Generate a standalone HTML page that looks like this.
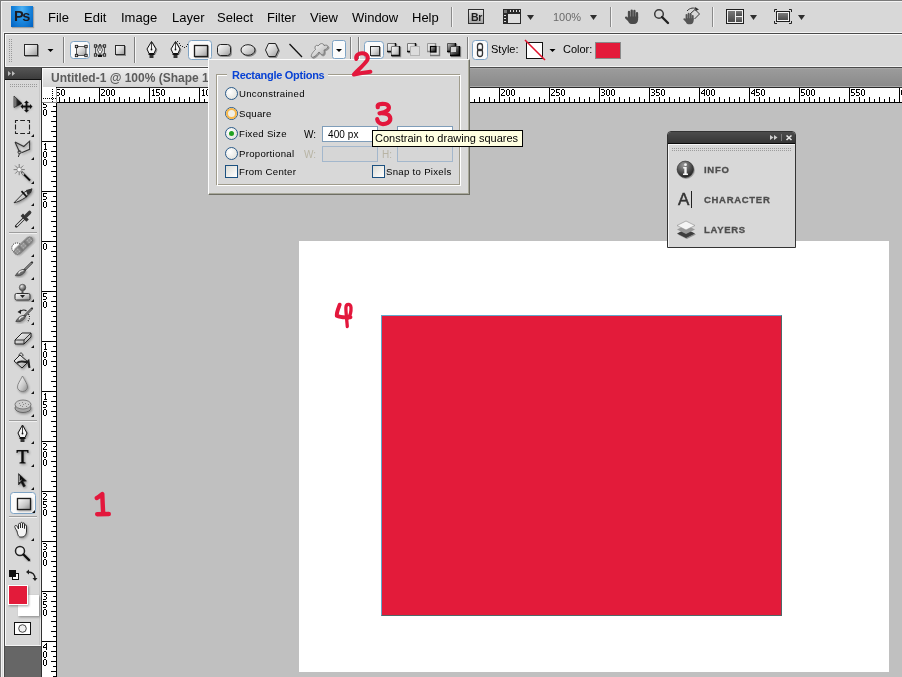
<!DOCTYPE html><html><head><meta charset="utf-8"><style>
*{margin:0;padding:0;box-sizing:border-box}
html,body{width:902px;height:677px;overflow:hidden;background:#c0c0c0;font-family:"Liberation Sans",sans-serif;position:relative}
.a{position:absolute}
.t{position:absolute;white-space:nowrap;line-height:1;will-change:transform}
svg{position:absolute;overflow:visible}
</style></head><body><div class="a" style="left:0px;top:0px;width:902px;height:677px;background:#c0c0c0"></div><div class="a" style="left:0px;top:0px;width:902px;height:33px;background:#d8d8d8"></div><div class="a" style="left:0px;top:0px;width:902px;height:1px;background:#7a7a7a"></div><div class="a" style="left:1px;top:1px;width:901px;height:1px;background:#f4f4f4"></div><div class="a" style="left:0px;top:0px;width:1px;height:677px;background:#7a7a7a"></div><div class="a" style="left:1px;top:1px;width:1px;height:676px;background:#f2f2f2"></div><div class="a" style="left:2px;top:33px;width:1px;height:644px;background:#d8d8d8"></div><div class="a" style="left:3px;top:32px;width:1px;height:645px;background:#f4f4f4"></div><div class="a" style="left:4px;top:33px;width:1px;height:644px;background:#4a4a4a"></div><div class="a" style="left:11px;top:6px;width:22px;height:21px;background:radial-gradient(ellipse at 50% 15%,#4fb3f5 0%,#1c8ae0 45%,#0060c0 100%);box-shadow:1px 1px 1px rgba(0,0,0,.25)"></div><div class="t" style="left:14px;top:9px;font-size:14.5px;font-weight:bold;color:#1c1c24;letter-spacing:-1.3px;line-height:15px">Ps</div><div class="t" style="left:48px;top:10px;font-size:13px;line-height:15px;color:#000">File</div><div class="t" style="left:84px;top:10px;font-size:13px;line-height:15px;color:#000">Edit</div><div class="t" style="left:121px;top:10px;font-size:13px;line-height:15px;color:#000">Image</div><div class="t" style="left:172px;top:10px;font-size:13px;line-height:15px;color:#000">Layer</div><div class="t" style="left:217px;top:10px;font-size:13px;line-height:15px;color:#000">Select</div><div class="t" style="left:267px;top:10px;font-size:13px;line-height:15px;color:#000">Filter</div><div class="t" style="left:310px;top:10px;font-size:13px;line-height:15px;color:#000">View</div><div class="t" style="left:352px;top:10px;font-size:13px;line-height:15px;color:#000">Window</div><div class="t" style="left:412px;top:10px;font-size:13px;line-height:15px;color:#000">Help</div><div class="a" style="left:451px;top:7px;width:1px;height:20px;background:#8a8a8a"></div><div class="a" style="left:452px;top:7px;width:1px;height:20px;background:#f2f2f2"></div><div class="a" style="left:610px;top:7px;width:1px;height:20px;background:#8a8a8a"></div><div class="a" style="left:611px;top:7px;width:1px;height:20px;background:#f2f2f2"></div><div class="a" style="left:712px;top:7px;width:1px;height:20px;background:#8a8a8a"></div><div class="a" style="left:713px;top:7px;width:1px;height:20px;background:#f2f2f2"></div><svg style="left:0px;top:0px" width="902" height="40" viewBox="0 0 902 40" ><defs><linearGradient id="brg" x1="0" y1="0" x2="0" y2="1"><stop offset="0" stop-color="#e6e6e6"/><stop offset="1" stop-color="#a4a4a4"/></linearGradient><linearGradient id="dg" x1="0" y1="0" x2="0" y2="1"><stop offset="0" stop-color="#7a7a7a"/><stop offset="1" stop-color="#4a4a4a"/></linearGradient></defs><rect x="468.5" y="9.5" width="15" height="14" fill="url(#brg)" stroke="#2e2e2e"/><rect x="503" y="9" width="18" height="15" fill="#2a2a2a"/><rect x="508" y="14" width="12" height="9" fill="#dedede"/><rect x="504" y="10" width="3" height="3" fill="#777"/><rect x="510" y="10" width="1" height="2" fill="#ddd"/><rect x="513" y="10" width="1" height="2" fill="#ddd"/><rect x="516" y="10" width="1" height="2" fill="#ddd"/><rect x="519" y="10" width="1" height="2" fill="#ddd"/><rect x="504" y="15" width="2" height="1" fill="#ddd"/><rect x="504" y="18" width="2" height="1" fill="#ddd"/><rect x="504" y="21" width="2" height="1" fill="#ddd"/><path d="M527 15h7l-3.5 5z" fill="#2e2e2e"/><path d="M590 15h7l-3.5 5z" fill="#2e2e2e"/><path d="M750 15h7l-3.5 5z" fill="#2e2e2e"/><path d="M798 15h7l-3.5 5z" fill="#2e2e2e"/><g transform="translate(624.5 9) scale(1.0)" fill="#4a4a4a" stroke="#4a4a4a"><path d="M4.5 8.5 V3 M7.2 8 V1.6 M9.9 8 V2 M12.5 9 V4.2 M4.2 11.2 L1.6 8.6" stroke-width="2.3" stroke-linecap="round" fill="none"/><path d="M3.4 7.5 H13.6 V10.5 C13.6 13 12 15 9.5 15 H7 C5 15 3.4 13 3.4 10.5Z" stroke="none"/></g><circle cx="659" cy="14" r="4.3" fill="none" stroke="#3a3a3a" stroke-width="1.5"/><path d="M662 17 L668 23" stroke="#222" stroke-width="2.4" stroke-linecap="round"/><path d="M690 14 L695 9.5 L699.5 14 L694.5 19" fill="none" stroke="#333" stroke-width="1"/><g transform="translate(683 12.5) scale(0.78)" fill="#555" stroke="#555"><path d="M4.5 8.5 V3 M7.2 8 V1.6 M9.9 8 V2 M12.5 9 V4.2 M4.2 11.2 L1.6 8.6" stroke-width="2.3" stroke-linecap="round" fill="none"/><path d="M3.4 7.5 H13.6 V10.5 C13.6 13 12 15 9.5 15 H7 C5 15 3.4 13 3.4 10.5Z" stroke="none"/></g><path d="M687 11 C690 7.5 694 7.5 697 9" fill="none" stroke="#333" stroke-width="1"/><path d="M699 9.5 l-4 -2.5 l0.5 4z" fill="#333"/><rect x="726" y="9" width="18" height="15" fill="#1e1e1e"/><rect x="727" y="10" width="16" height="13" fill="#f2f2f2"/><rect x="728" y="11" width="7" height="11" fill="url(#dg)"/><rect x="736" y="11" width="6" height="5" fill="url(#dg)"/><rect x="736" y="17" width="6" height="5" fill="url(#dg)"/><path d="M774.5 12 V9.5 H777 M789 9.5 H791.5 V12 M791.5 21 V23.5 H789 M777 23.5 H774.5 V21" fill="none" stroke="#222" stroke-width="1"/><rect x="776" y="11" width="14" height="11" fill="#1e1e1e"/><rect x="777" y="12" width="12" height="9" fill="#f2f2f2"/><rect x="778" y="13" width="10" height="7" fill="url(#dg)"/></svg><div class="t" style="left:471px;top:11px;font-size:10.5px;font-weight:bold;color:#1e1e1e;line-height:12px;letter-spacing:-0.3px">Br</div><div class="t" style="left:553px;top:11px;font-size:11px;color:#6a6a6a;line-height:12px">100%</div><div class="a" style="left:3px;top:32px;width:899px;height:1px;background:#f4f4f4"></div><div class="a" style="left:4px;top:33px;width:898px;height:1px;background:#4a4a4a"></div><div class="a" style="left:5px;top:34px;width:897px;height:33px;background:#d8d8d8"></div><div class="a" style="left:5px;top:34px;width:897px;height:1px;background:#fafafa"></div><div class="a" style="left:5px;top:34px;width:1px;height:33px;background:#fafafa"></div><div class="a" style="left:5px;top:66px;width:897px;height:1px;background:#f2f2f2"></div><div class="a" style="left:4px;top:67px;width:898px;height:1px;background:#4a4a4a"></div><svg style="left:0px;top:0px" width="902" height="677" viewBox="0 0 902 677" ><defs><linearGradient id="ig" x1="0" y1="0" x2="1" y2="1"><stop offset="0" stop-color="#ffffff"/><stop offset="0.55" stop-color="#d0d0d0"/><stop offset="1" stop-color="#9a9a9a"/></linearGradient><linearGradient id="ig2" x1="0" y1="0" x2="1" y2="1"><stop offset="0" stop-color="#555"/><stop offset="1" stop-color="#000"/></linearGradient><filter id="sh" x="-30%" y="-30%" width="160%" height="160%"><feDropShadow dx="1" dy="1" stdDeviation="0.6" flood-opacity="0.35"/></filter></defs><rect x="9" y="39" width="1" height="1" fill="#9a9a9a"/><rect x="11" y="39" width="1" height="1" fill="#9a9a9a"/><rect x="9" y="41" width="1" height="1" fill="#9a9a9a"/><rect x="11" y="41" width="1" height="1" fill="#9a9a9a"/><rect x="9" y="43" width="1" height="1" fill="#9a9a9a"/><rect x="11" y="43" width="1" height="1" fill="#9a9a9a"/><rect x="9" y="45" width="1" height="1" fill="#9a9a9a"/><rect x="11" y="45" width="1" height="1" fill="#9a9a9a"/><rect x="9" y="47" width="1" height="1" fill="#9a9a9a"/><rect x="11" y="47" width="1" height="1" fill="#9a9a9a"/><rect x="9" y="49" width="1" height="1" fill="#9a9a9a"/><rect x="11" y="49" width="1" height="1" fill="#9a9a9a"/><rect x="9" y="51" width="1" height="1" fill="#9a9a9a"/><rect x="11" y="51" width="1" height="1" fill="#9a9a9a"/><rect x="9" y="53" width="1" height="1" fill="#9a9a9a"/><rect x="11" y="53" width="1" height="1" fill="#9a9a9a"/><rect x="9" y="55" width="1" height="1" fill="#9a9a9a"/><rect x="11" y="55" width="1" height="1" fill="#9a9a9a"/><rect x="9" y="57" width="1" height="1" fill="#9a9a9a"/><rect x="11" y="57" width="1" height="1" fill="#9a9a9a"/><rect x="9" y="59" width="1" height="1" fill="#9a9a9a"/><rect x="11" y="59" width="1" height="1" fill="#9a9a9a"/><rect x="9" y="61" width="1" height="1" fill="#9a9a9a"/><rect x="11" y="61" width="1" height="1" fill="#9a9a9a"/><rect x="24.5" y="44.5" width="13" height="11" fill="url(#ig)" stroke="#2a2a2a" stroke-width="1" filter="url(#sh)"/><path d="M47.5 49h6l-3.0 3.0z" fill="#000"/><rect x="63" y="37" width="1" height="26" fill="#7e7e7e"/><rect x="64" y="37" width="1" height="26" fill="#f4f4f4"/><rect x="70.5" y="41.5" width="19" height="17" rx="3" fill="#fbfbfb" stroke="#7ea3c4"/><rect x="76.5" y="46.5" width="9.5" height="9" fill="url(#ig)" stroke="#333" stroke-width="0.8"/><rect x="75.3" y="45.3" width="2.4" height="2.4" fill="#ccc" stroke="#111" stroke-width="0.8"/><rect x="84.8" y="45.3" width="2.4" height="2.4" fill="#ccc" stroke="#111" stroke-width="0.8"/><rect x="75.3" y="54.3" width="2.4" height="2.4" fill="#ccc" stroke="#111" stroke-width="0.8"/><rect x="84.8" y="54.3" width="2.4" height="2.4" fill="#ccc" stroke="#111" stroke-width="0.8"/><rect x="95.5" y="46" width="9" height="9" fill="none" stroke="#333" stroke-width="0.8"/><rect x="94.3" y="44.8" width="2.4" height="2.4" fill="#ccc" stroke="#111" stroke-width="0.8"/><rect x="103.3" y="44.8" width="2.4" height="2.4" fill="#ccc" stroke="#111" stroke-width="0.8"/><rect x="94.3" y="53.8" width="2.4" height="2.4" fill="#ccc" stroke="#111" stroke-width="0.8"/><rect x="103.3" y="53.8" width="2.4" height="2.4" fill="#ccc" stroke="#111" stroke-width="0.8"/><path d="M100 44 L97.5 50 L100 55 L102.5 50Z" fill="#fff" stroke="#222" stroke-width="0.8"/><path d="M100 44V51" stroke="#222" stroke-width="0.8"/><rect x="98" y="55" width="4" height="2" fill="#111"/><rect x="115.5" y="45.5" width="9" height="9" fill="url(#ig)" stroke="#2a2a2a" stroke-width="1" filter="url(#sh)"/><rect x="134" y="37" width="1" height="26" fill="#7e7e7e"/><rect x="135" y="37" width="1" height="26" fill="#f4f4f4"/><path d="M151.5 41.5 L156.0 49 L154.0 53.5 H149.0 L147.0 49Z" fill="#f4f4f4" stroke="#111" stroke-width="1" filter="url(#sh)"/><path d="M151.5 42V49" stroke="#111" stroke-width="0.8"/><circle cx="151.5" cy="49.5" r="0.9" fill="#111"/><rect x="148.5" y="53.5" width="6" height="1.5" fill="#111"/><rect x="149.5" y="55" width="4" height="3" fill="#333"/><path d="M175.5 41.5 L180.0 49 L178.0 53.5 H173.0 L171.0 49Z" fill="#f4f4f4" stroke="#111" stroke-width="1" filter="url(#sh)"/><path d="M175.5 42V49" stroke="#111" stroke-width="0.8"/><circle cx="175.5" cy="49.5" r="0.9" fill="#111"/><rect x="172.5" y="53.5" width="6" height="1.5" fill="#111"/><rect x="173.5" y="55" width="4" height="3" fill="#333"/><rect x="177" y="41" width="1" height="1" fill="#222"/><rect x="179" y="43" width="1" height="1" fill="#222"/><rect x="180" y="45" width="1" height="1" fill="#222"/><rect x="182" y="46" width="1" height="1" fill="#222"/><rect x="184" y="47" width="1" height="1" fill="#222"/><rect x="186" y="46" width="1" height="1" fill="#222"/><rect x="187" y="44" width="1" height="1" fill="#222"/><rect x="188.5" y="40.5" width="23" height="19" rx="3" fill="#fbfbfb" stroke="#7ea3c4"/><rect x="194.5" y="45.5" width="13" height="11" fill="url(#ig)" stroke="#1a1a1a" stroke-width="1.3" filter="url(#sh)"/><rect x="217.5" y="44.5" width="13" height="11" rx="3" fill="url(#ig)" stroke="#222" filter="url(#sh)"/><ellipse cx="248" cy="50" rx="7" ry="5.3" fill="url(#ig)" stroke="#222" filter="url(#sh)"/><path d="M268.5 43.5 H275.5 L278.5 50 L275.5 56.5 H268.5 L265.5 50Z" fill="url(#ig)" stroke="#222" filter="url(#sh)"/><path d="M289.5 44 L302 57" stroke="#111" stroke-width="1.3"/><path d="M320 44 C322 43 324 44 324 45.5 C327 44.5 329 46 327.5 48 C326 49.5 324 50 324 50 C325 53 323.5 56 321 54.5 L319 52 C317 55 313 58.5 311.5 57 C310.5 55 313 52 315.5 49.5 C314 47 316 44 318 46Z" fill="url(#ig)" stroke="#6a6a6a" stroke-width="0.8" filter="url(#sh)"/><rect x="332.5" y="40.5" width="13" height="18" rx="2" fill="#fbfbfb" stroke="#7ea3c4"/><path d="M336 49h6l-3.0 3.0z" fill="#000"/><rect x="350" y="37" width="1" height="26" fill="#7e7e7e"/><rect x="351" y="37" width="1" height="26" fill="#f4f4f4"/><rect x="358" y="37" width="1" height="26" fill="#7e7e7e"/><rect x="359" y="37" width="1" height="26" fill="#f4f4f4"/><rect x="364.5" y="41.5" width="19" height="17" rx="3" fill="#fbfbfb" stroke="#7ea3c4"/><rect x="370.5" y="46.5" width="9" height="9" fill="url(#ig)" stroke="#2a2a2a" stroke-width="1" filter="url(#sh)"/><defs><linearGradient id="dk" x1="0" y1="0" x2="1" y2="1"><stop offset="0" stop-color="#e0e0e0"/><stop offset="0.5" stop-color="#555"/><stop offset="1" stop-color="#000"/></linearGradient></defs><g filter="url(#sh)"><rect x="387" y="43" width="9" height="9" fill="url(#ig)"/><path d="M387.5 52 V43.5 H396" stroke="#777" fill="none"/><path d="M395.5 43 V51.5 H387" stroke="#111" stroke-width="1.4" fill="none"/></g><g filter="url(#sh)"><rect x="391" y="46" width="9" height="10" fill="url(#ig)"/><path d="M391.5 56 V46.5 H400" stroke="#777" fill="none"/><path d="M399.5 46 V55.5 H391" stroke="#111" stroke-width="1.4" fill="none"/></g><g filter="url(#sh)"><rect x="407" y="43" width="9" height="9" fill="url(#ig)"/><path d="M407.5 52 V43.5 H416" stroke="#777" fill="none"/><path d="M415.5 43 V51.5 H407" stroke="#111" stroke-width="1.4" fill="none"/></g><rect x="410.5" y="46.5" width="9" height="9" fill="#dcdcdc" stroke="#b4b4b4"/><g><rect x="427" y="43" width="9" height="9" fill="#e2e2e2"/><path d="M427.5 52 V43.5 H436" stroke="#999" fill="none"/><path d="M435.5 43 V51.5 H427" stroke="#888" stroke-width="1.4" fill="none"/></g><g><rect x="430" y="46" width="10" height="10" fill="#dcdcdc"/><path d="M430.5 56 V46.5 H440" stroke="#aaa" fill="none"/><path d="M439.5 46 V55.5 H430" stroke="#777" stroke-width="1.4" fill="none"/></g><rect x="430.5" y="46.5" width="5.5" height="5.5" fill="url(#dk)" stroke="#000" stroke-width="1.2"/><g filter="url(#sh)"><rect x="447" y="43" width="9" height="9" fill="url(#dk)"/><path d="M447.5 52 V43.5 H456" stroke="#555" fill="none"/><path d="M455.5 43 V51.5 H447" stroke="#000" stroke-width="1.4" fill="none"/></g><g filter="url(#sh)"><rect x="450" y="46" width="10" height="10" fill="url(#dk)"/><path d="M450.5 56 V46.5 H460" stroke="#444" fill="none"/><path d="M459.5 46 V55.5 H450" stroke="#000" stroke-width="1.4" fill="none"/></g><rect x="451" y="47" width="5" height="5" fill="#d4d4d4"/><rect x="467" y="37" width="1" height="22" fill="#7e7e7e"/><rect x="468" y="37" width="1" height="22" fill="#f4f4f4"/><rect x="472.5" y="40.5" width="15" height="19" rx="3" fill="#fbfbfb" stroke="#7ea3c4"/><rect x="477.5" y="43.5" width="5" height="7" rx="2.5" fill="none" stroke="#333" stroke-width="1.3"/><rect x="477.5" y="49.5" width="5" height="7" rx="2.5" fill="none" stroke="#333" stroke-width="1.3"/><rect x="526.5" y="42.5" width="16" height="16" fill="#fff" stroke="#111"/><path d="M525 40 L545 60" stroke="#e0142e" stroke-width="1.6"/><path d="M549.5 49h6l-3.0 3.0z" fill="#000"/><rect x="595.5" y="42.5" width="25" height="16" fill="#e31b3a" stroke="#8a8a8a"/></svg><div class="t" style="left:491px;top:44px;font-size:11px;color:#000;line-height:11px">Style:</div><div class="t" style="left:563px;top:44px;font-size:11px;color:#000;line-height:11px">Color:</div><div class="a" style="left:5px;top:68px;width:36px;height:11px;background:linear-gradient(#545454,#3c3c3c)"></div><div class="a" style="left:5px;top:79px;width:36px;height:1px;background:#101010"></div><div class="a" style="left:5px;top:80px;width:36px;height:566px;background:#d8d8d8"></div><div class="a" style="left:5px;top:80px;width:1px;height:566px;background:#fafafa"></div><div class="a" style="left:39px;top:80px;width:1px;height:565px;background:#c8c8c8"></div><div class="a" style="left:40px;top:80px;width:1px;height:565px;background:#e6e6e6"></div><div class="a" style="left:5px;top:645px;width:36px;height:1px;background:#f4f4f4"></div><div class="a" style="left:5px;top:646px;width:36px;height:31px;background:#666"></div><div class="a" style="left:5px;top:646px;width:36px;height:1px;background:#5a5a5a"></div><svg style="left:0px;top:0px" width="902" height="677" viewBox="0 0 902 677" ><defs><linearGradient id="tg" x1="0" y1="0" x2="1" y2="1"><stop offset="0" stop-color="#fff"/><stop offset="0.6" stop-color="#c8c8c8"/><stop offset="1" stop-color="#8a8a8a"/></linearGradient><linearGradient id="tgd" x1="0" y1="0" x2="1" y2="0"><stop offset="0" stop-color="#aaa"/><stop offset="0.45" stop-color="#222"/><stop offset="1" stop-color="#000"/></linearGradient><filter id="tsh" x="-30%" y="-30%" width="160%" height="160%"><feDropShadow dx="1" dy="1.2" stdDeviation="0.8" flood-opacity="0.35"/></filter></defs><path d="M8 71 L11 73.5 L8 76Z M12 71 L15 73.5 L12 76Z" fill="#bdbdbd"/><rect x="10" y="84" width="1" height="1" fill="#9a9a9a"/><rect x="10" y="86" width="1" height="1" fill="#9a9a9a"/><rect x="12" y="84" width="1" height="1" fill="#9a9a9a"/><rect x="12" y="86" width="1" height="1" fill="#9a9a9a"/><rect x="14" y="84" width="1" height="1" fill="#9a9a9a"/><rect x="14" y="86" width="1" height="1" fill="#9a9a9a"/><rect x="16" y="84" width="1" height="1" fill="#9a9a9a"/><rect x="16" y="86" width="1" height="1" fill="#9a9a9a"/><rect x="18" y="84" width="1" height="1" fill="#9a9a9a"/><rect x="18" y="86" width="1" height="1" fill="#9a9a9a"/><rect x="20" y="84" width="1" height="1" fill="#9a9a9a"/><rect x="20" y="86" width="1" height="1" fill="#9a9a9a"/><rect x="22" y="84" width="1" height="1" fill="#9a9a9a"/><rect x="22" y="86" width="1" height="1" fill="#9a9a9a"/><rect x="24" y="84" width="1" height="1" fill="#9a9a9a"/><rect x="24" y="86" width="1" height="1" fill="#9a9a9a"/><rect x="26" y="84" width="1" height="1" fill="#9a9a9a"/><rect x="26" y="86" width="1" height="1" fill="#9a9a9a"/><rect x="28" y="84" width="1" height="1" fill="#9a9a9a"/><rect x="28" y="86" width="1" height="1" fill="#9a9a9a"/><rect x="30" y="84" width="1" height="1" fill="#9a9a9a"/><rect x="30" y="86" width="1" height="1" fill="#9a9a9a"/><rect x="32" y="84" width="1" height="1" fill="#9a9a9a"/><rect x="32" y="86" width="1" height="1" fill="#9a9a9a"/><rect x="34" y="84" width="1" height="1" fill="#9a9a9a"/><rect x="34" y="86" width="1" height="1" fill="#9a9a9a"/><rect x="36" y="84" width="1" height="1" fill="#9a9a9a"/><rect x="36" y="86" width="1" height="1" fill="#9a9a9a"/><path d="M14 96 L22 103.5 L14 107.5Z" fill="url(#tgd)" stroke="#111" stroke-width="0.6" filter="url(#tsh)"/><path d="M26.5 102 V111 M22 106.5 H31" stroke="#111" stroke-width="1.8" filter="url(#tsh)"/><path d="M26.5 100.5 l-2.5 2.5h5z M26.5 112.5 l-2.5-2.5h5z M20.5 106.5 l2.5-2.5v5z M32.5 106.5 l-2.5-2.5v5z" fill="#111"/><path d="M15.5 123 V120.5 H18 M20.2 120.5 H25 M27.2 120.5 H29.5 V123 M29.5 124.5 V129.5 M29.5 131.2 V133.5 H27.2 M25 133.5 H20.2 M18 133.5 H15.5 V131.2 M15.5 124.5 V129.5" stroke="#222" stroke-width="1.1" fill="none"/><path d="M34 134 V137 H31Z" fill="#111"/><path d="M15 142 L23.8 146.5 L29.6 141.2 V149.3 L21.5 152.7 M15 142 L19.5 152" fill="none" stroke="#333" stroke-width="1.1" filter="url(#tsh)"/><circle cx="19.5" cy="152.2" r="1.5" fill="none" stroke="#333"/><path d="M19.5 153.5 L18.3 157" stroke="#333"/><path d="M34 157 V160 H31Z" fill="#111"/><path d="M21.5 172 L30 180.5" stroke="#111" stroke-width="2" filter="url(#tsh)"/><path d="M21.8 172.3 L24 174.5" stroke="#eee" stroke-width="1.2"/><path d="M19.2 164 V175.2 M13.6 169.6 H24.8 M15.2 165.6 L23.2 173.6 M23.2 165.6 L15.2 173.6" stroke="#555" stroke-width="0.7"/><circle cx="19.2" cy="169.6" r="2.2" fill="#f2f2f2" stroke="#777" stroke-width="0.5"/><path d="M34 181 V184 H31Z" fill="#111"/><path d="M14 202.8 L24.5 192 L32 188.8 L30.5 193 L25.5 197.5 C21 200.5 17 202.3 14 202.8Z" fill="url(#tg)" stroke="#222" stroke-width="0.9" filter="url(#tsh)"/><path d="M26 190 L32 188.8 L30.5 193 L27.5 195Z" fill="#333"/><path d="M21.5 191.2 L26.8 196.8" stroke="#111" stroke-width="1.7"/><path d="M34 203 V206 H31Z" fill="#111"/><path d="M16.3 226.3 L24 218.6" stroke="#222" stroke-width="2.8" stroke-linecap="round"/><path d="M16.6 226 L24 218.6" stroke="#f4f4f4" stroke-width="1.1"/><path d="M21.8 214.8 L27.6 220.6" stroke="#333" stroke-width="3.4"/><path d="M26.3 215.8 L29.6 212.5" stroke="#3a3a3a" stroke-width="3.6" stroke-linecap="round"/><path d="M34 226 V229 H31Z" fill="#111"/><rect x="9" y="232" width="28" height="1" fill="#9e9e9e"/><rect x="9" y="233" width="28" height="1" fill="#f0f0f0"/><circle cx="16.8" cy="248" r="5" fill="#fff" stroke="#111" stroke-width="1" stroke-dasharray="1 1.1"/><g transform="translate(23.4 245.8) rotate(-43)" filter="url(#tsh)"><rect x="-11.5" y="-3.2" width="23" height="6.4" rx="3.2" fill="#8a8a8a" stroke="#5a5a5a" stroke-width="0.6"/><path d="M-3.8 -3.2V3.2 M3.8 -3.2V3.2" stroke="#5a5a5a" stroke-width="0.6"/><rect x="-9.7" y="-1.7" width="1" height="1" fill="#e8e8e8"/><rect x="-7.3" y="-1.7" width="1" height="1" fill="#e8e8e8"/><rect x="-9.7" y="0.7" width="1" height="1" fill="#e8e8e8"/><rect x="-7.3" y="0.7" width="1" height="1" fill="#e8e8e8"/><rect x="-1.7" y="-1.7" width="1" height="1" fill="#e8e8e8"/><rect x="0.7" y="-1.7" width="1" height="1" fill="#e8e8e8"/><rect x="-1.7" y="0.7" width="1" height="1" fill="#e8e8e8"/><rect x="0.7" y="0.7" width="1" height="1" fill="#e8e8e8"/><rect x="6.3" y="-1.7" width="1" height="1" fill="#e8e8e8"/><rect x="8.7" y="-1.7" width="1" height="1" fill="#e8e8e8"/><rect x="6.3" y="0.7" width="1" height="1" fill="#e8e8e8"/><rect x="8.7" y="0.7" width="1" height="1" fill="#e8e8e8"/></g><path d="M34 254 V257 H31Z" fill="#111"/><path d="M32 262.5 L24.5 270" stroke="#333" stroke-width="2.4" stroke-linecap="round"/><path d="M31.5 263 L25 269.5" stroke="#e0e0e0" stroke-width="0.8"/><path d="M25.5 270.5 C23 268 18.5 270.5 15.3 275.7 C19 276.3 23.5 275 25.5 270.5Z" fill="#6a6a6a" stroke="#333" stroke-width="0.7" filter="url(#tsh)"/><path d="M23.5 270.5 C21 270.5 19 272.5 18.5 273.5" stroke="#f0f0f0" stroke-width="1.2" fill="none"/><path d="M34 277 V280 H31Z" fill="#111"/><defs><radialGradient id="knob" cx="0.35" cy="0.3" r="0.8"><stop offset="0" stop-color="#eee"/><stop offset="0.5" stop-color="#888"/><stop offset="1" stop-color="#333"/></radialGradient></defs><circle cx="22.5" cy="287.5" r="3.2" fill="url(#knob)" stroke="#333" stroke-width="0.6"/><rect x="21.5" y="290" width="2" height="4" fill="#555"/><rect x="15" y="293.5" width="15" height="6.5" rx="1.5" fill="url(#tg)" stroke="#333" stroke-width="1" filter="url(#tsh)"/><path d="M20 295 H25 L22.5 298Z" fill="#222"/><path d="M34 299 V302 H31Z" fill="#111"/><path d="M32 308.5 L24.5 316" stroke="#333" stroke-width="2.2" stroke-linecap="round"/><path d="M31.5 309 L25 315.5" stroke="#e0e0e0" stroke-width="0.7"/><path d="M25.5 316.5 C23 314 18.5 316.5 15.8 321.5 C19.5 322.2 23.5 321 25.5 316.5Z" fill="#6a6a6a" stroke="#333" stroke-width="0.7" filter="url(#tsh)"/><path d="M23.5 316.5 C21 316.5 19.5 318.5 19 319.5" stroke="#f0f0f0" stroke-width="1.2" fill="none"/><path d="M20 311.5 C22 309.5 25 309.5 26.5 311" fill="none" stroke="#222" stroke-width="1.1"/><path d="M17.5 312 l3.5 -2.5 l0 4.5z" fill="#222"/><path d="M28.5 314 C30 316.5 30 319.5 27 322" fill="none" stroke="#111" stroke-width="1.1" stroke-dasharray="1 1.2"/><path d="M34 322 V325 H31Z" fill="#111"/><path d="M15 340 L22 333 L31 333 L31 337 L24 344 L15 344Z" fill="url(#tg)" stroke="#222" stroke-width="1" filter="url(#tsh)"/><path d="M15 340 H24 L31 333 M24 340 V344" stroke="#222" stroke-width="0.9" fill="none"/><path d="M34 345 V348 H31Z" fill="#111"/><path d="M14 361 L20 355 L28 362 L22 368Z" fill="url(#tg)" stroke="#222" stroke-width="1" filter="url(#tsh)"/><path d="M19 356 C19 352 23 352 23 356" fill="none" stroke="#333"/><path d="M28 362 L29 367" stroke="#333" stroke-width="1.5"/><path d="M34 368 V371 H31Z" fill="#111"/><path d="M22.5 376 C20 381 17.5 384 17.5 387 A5 4.5 0 0 0 27.5 387 C27.5 384 25 381 22.5 376Z" fill="url(#tg)" stroke="#666" stroke-width="0.7" filter="url(#tsh)"/><path d="M34 391 V394 H31Z" fill="#111"/><ellipse cx="23" cy="408" rx="8" ry="4.5" fill="#a8a8a8" stroke="#555" stroke-width="0.8" filter="url(#tsh)"/><ellipse cx="23" cy="404.5" rx="8" ry="4.5" fill="#cdcdcd" stroke="#666" stroke-width="0.8"/><rect x="19" y="403" width="1" height="1" fill="#888"/><rect x="22" y="402" width="1" height="1" fill="#888"/><rect x="25" y="403" width="1" height="1" fill="#888"/><rect x="28" y="404" width="1" height="1" fill="#888"/><rect x="20" y="405" width="1" height="1" fill="#888"/><rect x="23" y="404" width="1" height="1" fill="#888"/><rect x="26" y="406" width="1" height="1" fill="#888"/><rect x="22" y="406" width="1" height="1" fill="#888"/><path d="M17 363 C22 359 26 364 28.5 361 L29.5 368" stroke="#222" stroke-width="2" fill="none"/><path d="M34 414 V417 H31Z" fill="#111"/><rect x="9" y="420" width="28" height="1" fill="#9e9e9e"/><rect x="9" y="421" width="28" height="1" fill="#f0f0f0"/><path d="M22.5 425 L27 433 L25 437.5 H20 L18 433Z" fill="#f4f4f4" stroke="#111" stroke-width="1" filter="url(#tsh)"/><path d="M22.5 426V433" stroke="#111" stroke-width="0.8"/><circle cx="22.5" cy="433.5" r="0.9" fill="#111"/><rect x="19.5" y="437.5" width="6" height="1.5" fill="#111"/><rect x="20.5" y="439" width="4" height="3" fill="#333"/><path d="M34 441 V444 H31Z" fill="#111"/><path d="M16.5 450 H28.5 V453 H27.5 L27 451.5 H23.7 V462 L25.5 462.5 V463.5 H19.5 V462.5 L21.3 462 V451.5 H18 L17.5 453 H16.5Z" fill="#111" filter="url(#tsh)"/><path d="M34 464 V467 H31Z" fill="#111"/><path d="M18.5 473.5 L26.5 481 L23 481.5 L25.5 486 L23.5 487 L21 482.5 L18.5 485Z" fill="#111" stroke="#222" stroke-width="0.5" filter="url(#tsh)"/><path d="M19.3 475.5 L19.3 482 L21.5 480" stroke="#ddd" stroke-width="0.8" fill="none"/><path d="M34 487 V490 H31Z" fill="#111"/><rect x="10.5" y="492.5" width="25" height="21" rx="3" fill="#fbfbfb" stroke="#7ea3c4"/><rect x="17.5" y="498.5" width="13" height="11" fill="url(#tg)" stroke="#1a1a1a" stroke-width="1.3" filter="url(#tsh)"/><path d="M35 510 V513 H32Z" fill="#111"/><rect x="9" y="516" width="28" height="1" fill="#9e9e9e"/><rect x="9" y="517" width="28" height="1" fill="#f0f0f0"/><path d="M17 531 C15 528 14 526 15.5 525.5 C17 525 18 528 18.5 529 V524.5 C18.5 523 20.5 523 20.5 524.5 V528 V523.5 C20.5 522 22.5 522 22.5 523.5 V528 V524 C22.5 522.5 24.5 522.5 24.5 524 V528.5 V526 C24.5 524.5 26.5 524.5 26.5 526 V531 C26.5 534 25 537 22 537 H20 C18.5 537 17.5 534 17 531Z" fill="#f4f4f4" stroke="#222" stroke-width="0.9" filter="url(#tsh)"/><path d="M34 538 V541 H31Z" fill="#111"/><circle cx="20" cy="551" r="4.5" fill="#e8e8e8" stroke="#222" stroke-width="1.5"/><path d="M23.5 554.5 L29 560" stroke="#111" stroke-width="2.4" stroke-linecap="round" filter="url(#tsh)"/><rect x="12.5" y="573.5" width="6" height="6" fill="#fff" stroke="#111"/><rect x="9" y="570" width="7" height="7" fill="#111"/><path d="M28 572 C33 572 35 574 35 579" fill="none" stroke="#222" stroke-width="1.3"/><path d="M26 572 l3-2.5v5z M35 581 l-2.5-3h5z" fill="#222"/><rect x="18" y="595" width="21" height="21" fill="#fff" filter="url(#tsh)"/><rect x="8" y="585" width="20" height="20" fill="#fff" filter="url(#tsh)"/><rect x="9" y="586" width="18" height="18" fill="#e31b3a"/><rect x="14.5" y="622.5" width="16" height="12" fill="#fff" stroke="#111"/><rect x="14.5" y="622.5" width="16" height="12" fill="none" stroke="#fff" stroke-width="0" /><circle cx="22.5" cy="628.5" r="3.8" fill="#f0f0f0" stroke="#333" stroke-width="0.9"/></svg><div class="a" style="left:41px;top:68px;width:861px;height:19px;background:linear-gradient(#9c9c9c,#8a8a8a)"></div><div class="a" style="left:41px;top:68px;width:861px;height:1px;background:#a6a6a6"></div><div class="a" style="left:41px;top:86px;width:861px;height:1px;background:#a8a8a8"></div><div class="a" style="left:41px;top:68px;width:1px;height:609px;background:#303030"></div><div class="a" style="left:42px;top:68px;width:168px;height:19px;background:linear-gradient(#eeeeee,#d4d4d4)"></div><div class="a" style="left:42px;top:68px;width:168px;height:1px;background:#fafafa"></div><div class="a" style="left:42px;top:68px;width:1px;height:19px;background:#fafafa"></div><div class="t" style="left:51px;top:72px;font-size:12px;font-weight:bold;color:#5c5c5c;line-height:13px">Untitled-1 @ 100% (Shape 1)</div><div class="a" style="left:42px;top:87px;width:860px;height:16px;background:#fff;border-top:1px solid #2a2a2a;border-bottom:1px solid #000"></div><div class="a" style="left:42px;top:87px;width:15px;height:590px;background:#fff;border-right:1px solid #000"></div><svg style="left:0px;top:0px" width="902" height="677" viewBox="0 0 902 677" ><path d="M59.5 97V102 M64.5 99V102 M69.5 97V102 M74.5 99V102 M79.5 97V102 M84.5 99V102 M89.5 97V102 M94.5 99V102 M99.5 88V102 M104.5 99V102 M109.5 97V102 M114.5 99V102 M119.5 97V102 M124.5 99V102 M129.5 97V102 M134.5 99V102 M139.5 97V102 M144.5 99V102 M149.5 88V102 M154.5 99V102 M159.5 97V102 M164.5 99V102 M169.5 97V102 M174.5 99V102 M179.5 97V102 M184.5 99V102 M189.5 97V102 M194.5 99V102 M199.5 88V102 M204.5 99V102 M209.5 97V102 M214.5 99V102 M219.5 97V102 M224.5 99V102 M229.5 97V102 M234.5 99V102 M239.5 97V102 M244.5 99V102 M249.5 88V102 M254.5 99V102 M259.5 97V102 M264.5 99V102 M269.5 97V102 M274.5 99V102 M279.5 97V102 M284.5 99V102 M289.5 97V102 M294.5 99V102 M299.5 88V102 M304.5 99V102 M309.5 97V102 M314.5 99V102 M319.5 97V102 M324.5 99V102 M329.5 97V102 M334.5 99V102 M339.5 97V102 M344.5 99V102 M349.5 88V102 M354.5 99V102 M359.5 97V102 M364.5 99V102 M369.5 97V102 M374.5 99V102 M379.5 97V102 M384.5 99V102 M389.5 97V102 M394.5 99V102 M399.5 88V102 M404.5 99V102 M409.5 97V102 M414.5 99V102 M419.5 97V102 M424.5 99V102 M429.5 97V102 M434.5 99V102 M439.5 97V102 M444.5 99V102 M449.5 88V102 M454.5 99V102 M459.5 97V102 M464.5 99V102 M469.5 97V102 M474.5 99V102 M479.5 97V102 M484.5 99V102 M489.5 97V102 M494.5 99V102 M499.5 88V102 M504.5 99V102 M509.5 97V102 M514.5 99V102 M519.5 97V102 M524.5 99V102 M529.5 97V102 M534.5 99V102 M539.5 97V102 M544.5 99V102 M549.5 88V102 M554.5 99V102 M559.5 97V102 M564.5 99V102 M569.5 97V102 M574.5 99V102 M579.5 97V102 M584.5 99V102 M589.5 97V102 M594.5 99V102 M599.5 88V102 M604.5 99V102 M609.5 97V102 M614.5 99V102 M619.5 97V102 M624.5 99V102 M629.5 97V102 M634.5 99V102 M639.5 97V102 M644.5 99V102 M649.5 88V102 M654.5 99V102 M659.5 97V102 M664.5 99V102 M669.5 97V102 M674.5 99V102 M679.5 97V102 M684.5 99V102 M689.5 97V102 M694.5 99V102 M699.5 88V102 M704.5 99V102 M709.5 97V102 M714.5 99V102 M719.5 97V102 M724.5 99V102 M729.5 97V102 M734.5 99V102 M739.5 97V102 M744.5 99V102 M749.5 88V102 M754.5 99V102 M759.5 97V102 M764.5 99V102 M769.5 97V102 M774.5 99V102 M779.5 97V102 M784.5 99V102 M789.5 97V102 M794.5 99V102 M799.5 88V102 M804.5 99V102 M809.5 97V102 M814.5 99V102 M819.5 97V102 M824.5 99V102 M829.5 97V102 M834.5 99V102 M839.5 97V102 M844.5 99V102 M849.5 88V102 M854.5 99V102 M859.5 97V102 M864.5 99V102 M869.5 97V102 M874.5 99V102 M879.5 97V102 M884.5 99V102 M889.5 97V102 M894.5 99V102 M899.5 88V102 M53 106.5H56 M51 111.5H56 M53 116.5H56 M51 121.5H56 M53 126.5H56 M51 131.5H56 M53 136.5H56 M42 141.5H56 M53 146.5H56 M51 151.5H56 M53 156.5H56 M51 161.5H56 M53 166.5H56 M51 171.5H56 M53 176.5H56 M51 181.5H56 M53 186.5H56 M42 191.5H56 M53 196.5H56 M51 201.5H56 M53 206.5H56 M51 211.5H56 M53 216.5H56 M51 221.5H56 M53 226.5H56 M51 231.5H56 M53 236.5H56 M42 241.5H56 M53 246.5H56 M51 251.5H56 M53 256.5H56 M51 261.5H56 M53 266.5H56 M51 271.5H56 M53 276.5H56 M51 281.5H56 M53 286.5H56 M42 291.5H56 M53 296.5H56 M51 301.5H56 M53 306.5H56 M51 311.5H56 M53 316.5H56 M51 321.5H56 M53 326.5H56 M51 331.5H56 M53 336.5H56 M42 341.5H56 M53 346.5H56 M51 351.5H56 M53 356.5H56 M51 361.5H56 M53 366.5H56 M51 371.5H56 M53 376.5H56 M51 381.5H56 M53 386.5H56 M42 391.5H56 M53 396.5H56 M51 401.5H56 M53 406.5H56 M51 411.5H56 M53 416.5H56 M51 421.5H56 M53 426.5H56 M51 431.5H56 M53 436.5H56 M42 441.5H56 M53 446.5H56 M51 451.5H56 M53 456.5H56 M51 461.5H56 M53 466.5H56 M51 471.5H56 M53 476.5H56 M51 481.5H56 M53 486.5H56 M42 491.5H56 M53 496.5H56 M51 501.5H56 M53 506.5H56 M51 511.5H56 M53 516.5H56 M51 521.5H56 M53 526.5H56 M51 531.5H56 M53 536.5H56 M42 541.5H56 M53 546.5H56 M51 551.5H56 M53 556.5H56 M51 561.5H56 M53 566.5H56 M51 571.5H56 M53 576.5H56 M51 581.5H56 M53 586.5H56 M42 591.5H56 M53 596.5H56 M51 601.5H56 M53 606.5H56 M51 611.5H56 M53 616.5H56 M51 621.5H56 M53 626.5H56 M51 631.5H56 M53 636.5H56 M42 641.5H56 M53 646.5H56 M51 651.5H56 M53 656.5H56 M51 661.5H56 M53 666.5H56 M51 671.5H56 M53 676.5H56" stroke="#000" stroke-width="1" fill="none" shape-rendering="crispEdges"/><path d="M57 89h1v1h-1zM58 89h1v1h-1zM59 89h1v1h-1zM57 92h1v1h-1zM58 92h1v1h-1zM59 93h1v1h-1zM59 94h1v1h-1zM57 95h1v1h-1zM58 95h1v1h-1zM62 89h1v1h-1zM63 89h1v1h-1zM61 90h1v1h-1zM64 90h1v1h-1zM61 91h1v1h-1zM64 91h1v1h-1zM61 92h1v1h-1zM64 92h1v1h-1zM61 93h1v1h-1zM64 93h1v1h-1zM61 94h1v1h-1zM64 94h1v1h-1zM62 95h1v1h-1zM63 95h1v1h-1zM101 89h1v1h-1zM102 89h1v1h-1zM103 89h1v1h-1zM104 90h1v1h-1zM104 91h1v1h-1zM103 92h1v1h-1zM102 93h1v1h-1zM101 94h1v1h-1zM101 95h1v1h-1zM102 95h1v1h-1zM103 95h1v1h-1zM104 95h1v1h-1zM107 89h1v1h-1zM108 89h1v1h-1zM106 90h1v1h-1zM109 90h1v1h-1zM106 91h1v1h-1zM109 91h1v1h-1zM106 92h1v1h-1zM109 92h1v1h-1zM106 93h1v1h-1zM109 93h1v1h-1zM106 94h1v1h-1zM109 94h1v1h-1zM107 95h1v1h-1zM108 95h1v1h-1zM112 89h1v1h-1zM113 89h1v1h-1zM111 90h1v1h-1zM114 90h1v1h-1zM111 91h1v1h-1zM114 91h1v1h-1zM111 92h1v1h-1zM114 92h1v1h-1zM111 93h1v1h-1zM114 93h1v1h-1zM111 94h1v1h-1zM114 94h1v1h-1zM112 95h1v1h-1zM113 95h1v1h-1zM153 89h1v1h-1zM152 90h1v1h-1zM153 90h1v1h-1zM153 91h1v1h-1zM153 92h1v1h-1zM153 93h1v1h-1zM153 94h1v1h-1zM152 95h1v1h-1zM153 95h1v1h-1zM154 95h1v1h-1zM156 89h1v1h-1zM157 89h1v1h-1zM158 89h1v1h-1zM159 89h1v1h-1zM156 90h1v1h-1zM156 91h1v1h-1zM156 92h1v1h-1zM157 92h1v1h-1zM158 92h1v1h-1zM159 93h1v1h-1zM159 94h1v1h-1zM156 95h1v1h-1zM157 95h1v1h-1zM158 95h1v1h-1zM162 89h1v1h-1zM163 89h1v1h-1zM161 90h1v1h-1zM164 90h1v1h-1zM161 91h1v1h-1zM164 91h1v1h-1zM161 92h1v1h-1zM164 92h1v1h-1zM161 93h1v1h-1zM164 93h1v1h-1zM161 94h1v1h-1zM164 94h1v1h-1zM162 95h1v1h-1zM163 95h1v1h-1zM203 89h1v1h-1zM202 90h1v1h-1zM203 90h1v1h-1zM203 91h1v1h-1zM203 92h1v1h-1zM203 93h1v1h-1zM203 94h1v1h-1zM202 95h1v1h-1zM203 95h1v1h-1zM204 95h1v1h-1zM207 89h1v1h-1zM208 89h1v1h-1zM206 90h1v1h-1zM209 90h1v1h-1zM206 91h1v1h-1zM209 91h1v1h-1zM206 92h1v1h-1zM209 92h1v1h-1zM206 93h1v1h-1zM209 93h1v1h-1zM206 94h1v1h-1zM209 94h1v1h-1zM207 95h1v1h-1zM208 95h1v1h-1zM212 89h1v1h-1zM213 89h1v1h-1zM211 90h1v1h-1zM214 90h1v1h-1zM211 91h1v1h-1zM214 91h1v1h-1zM211 92h1v1h-1zM214 92h1v1h-1zM211 93h1v1h-1zM214 93h1v1h-1zM211 94h1v1h-1zM214 94h1v1h-1zM212 95h1v1h-1zM213 95h1v1h-1zM251 89h1v1h-1zM252 89h1v1h-1zM253 89h1v1h-1zM254 89h1v1h-1zM251 90h1v1h-1zM251 91h1v1h-1zM251 92h1v1h-1zM252 92h1v1h-1zM253 92h1v1h-1zM254 93h1v1h-1zM254 94h1v1h-1zM251 95h1v1h-1zM252 95h1v1h-1zM253 95h1v1h-1zM257 89h1v1h-1zM258 89h1v1h-1zM256 90h1v1h-1zM259 90h1v1h-1zM256 91h1v1h-1zM259 91h1v1h-1zM256 92h1v1h-1zM259 92h1v1h-1zM256 93h1v1h-1zM259 93h1v1h-1zM256 94h1v1h-1zM259 94h1v1h-1zM257 95h1v1h-1zM258 95h1v1h-1zM302 89h1v1h-1zM303 89h1v1h-1zM301 90h1v1h-1zM304 90h1v1h-1zM301 91h1v1h-1zM304 91h1v1h-1zM301 92h1v1h-1zM304 92h1v1h-1zM301 93h1v1h-1zM304 93h1v1h-1zM301 94h1v1h-1zM304 94h1v1h-1zM302 95h1v1h-1zM303 95h1v1h-1zM351 89h1v1h-1zM352 89h1v1h-1zM353 89h1v1h-1zM354 89h1v1h-1zM351 90h1v1h-1zM351 91h1v1h-1zM351 92h1v1h-1zM352 92h1v1h-1zM353 92h1v1h-1zM354 93h1v1h-1zM354 94h1v1h-1zM351 95h1v1h-1zM352 95h1v1h-1zM353 95h1v1h-1zM357 89h1v1h-1zM358 89h1v1h-1zM356 90h1v1h-1zM359 90h1v1h-1zM356 91h1v1h-1zM359 91h1v1h-1zM356 92h1v1h-1zM359 92h1v1h-1zM356 93h1v1h-1zM359 93h1v1h-1zM356 94h1v1h-1zM359 94h1v1h-1zM357 95h1v1h-1zM358 95h1v1h-1zM403 89h1v1h-1zM402 90h1v1h-1zM403 90h1v1h-1zM403 91h1v1h-1zM403 92h1v1h-1zM403 93h1v1h-1zM403 94h1v1h-1zM402 95h1v1h-1zM403 95h1v1h-1zM404 95h1v1h-1zM407 89h1v1h-1zM408 89h1v1h-1zM406 90h1v1h-1zM409 90h1v1h-1zM406 91h1v1h-1zM409 91h1v1h-1zM406 92h1v1h-1zM409 92h1v1h-1zM406 93h1v1h-1zM409 93h1v1h-1zM406 94h1v1h-1zM409 94h1v1h-1zM407 95h1v1h-1zM408 95h1v1h-1zM412 89h1v1h-1zM413 89h1v1h-1zM411 90h1v1h-1zM414 90h1v1h-1zM411 91h1v1h-1zM414 91h1v1h-1zM411 92h1v1h-1zM414 92h1v1h-1zM411 93h1v1h-1zM414 93h1v1h-1zM411 94h1v1h-1zM414 94h1v1h-1zM412 95h1v1h-1zM413 95h1v1h-1zM453 89h1v1h-1zM452 90h1v1h-1zM453 90h1v1h-1zM453 91h1v1h-1zM453 92h1v1h-1zM453 93h1v1h-1zM453 94h1v1h-1zM452 95h1v1h-1zM453 95h1v1h-1zM454 95h1v1h-1zM456 89h1v1h-1zM457 89h1v1h-1zM458 89h1v1h-1zM459 89h1v1h-1zM456 90h1v1h-1zM456 91h1v1h-1zM456 92h1v1h-1zM457 92h1v1h-1zM458 92h1v1h-1zM459 93h1v1h-1zM459 94h1v1h-1zM456 95h1v1h-1zM457 95h1v1h-1zM458 95h1v1h-1zM462 89h1v1h-1zM463 89h1v1h-1zM461 90h1v1h-1zM464 90h1v1h-1zM461 91h1v1h-1zM464 91h1v1h-1zM461 92h1v1h-1zM464 92h1v1h-1zM461 93h1v1h-1zM464 93h1v1h-1zM461 94h1v1h-1zM464 94h1v1h-1zM462 95h1v1h-1zM463 95h1v1h-1zM501 89h1v1h-1zM502 89h1v1h-1zM503 89h1v1h-1zM504 90h1v1h-1zM504 91h1v1h-1zM503 92h1v1h-1zM502 93h1v1h-1zM501 94h1v1h-1zM501 95h1v1h-1zM502 95h1v1h-1zM503 95h1v1h-1zM504 95h1v1h-1zM507 89h1v1h-1zM508 89h1v1h-1zM506 90h1v1h-1zM509 90h1v1h-1zM506 91h1v1h-1zM509 91h1v1h-1zM506 92h1v1h-1zM509 92h1v1h-1zM506 93h1v1h-1zM509 93h1v1h-1zM506 94h1v1h-1zM509 94h1v1h-1zM507 95h1v1h-1zM508 95h1v1h-1zM512 89h1v1h-1zM513 89h1v1h-1zM511 90h1v1h-1zM514 90h1v1h-1zM511 91h1v1h-1zM514 91h1v1h-1zM511 92h1v1h-1zM514 92h1v1h-1zM511 93h1v1h-1zM514 93h1v1h-1zM511 94h1v1h-1zM514 94h1v1h-1zM512 95h1v1h-1zM513 95h1v1h-1zM551 89h1v1h-1zM552 89h1v1h-1zM553 89h1v1h-1zM554 90h1v1h-1zM554 91h1v1h-1zM553 92h1v1h-1zM552 93h1v1h-1zM551 94h1v1h-1zM551 95h1v1h-1zM552 95h1v1h-1zM553 95h1v1h-1zM554 95h1v1h-1zM556 89h1v1h-1zM557 89h1v1h-1zM558 89h1v1h-1zM559 89h1v1h-1zM556 90h1v1h-1zM556 91h1v1h-1zM556 92h1v1h-1zM557 92h1v1h-1zM558 92h1v1h-1zM559 93h1v1h-1zM559 94h1v1h-1zM556 95h1v1h-1zM557 95h1v1h-1zM558 95h1v1h-1zM562 89h1v1h-1zM563 89h1v1h-1zM561 90h1v1h-1zM564 90h1v1h-1zM561 91h1v1h-1zM564 91h1v1h-1zM561 92h1v1h-1zM564 92h1v1h-1zM561 93h1v1h-1zM564 93h1v1h-1zM561 94h1v1h-1zM564 94h1v1h-1zM562 95h1v1h-1zM563 95h1v1h-1zM601 89h1v1h-1zM602 89h1v1h-1zM603 89h1v1h-1zM604 90h1v1h-1zM604 91h1v1h-1zM602 92h1v1h-1zM603 92h1v1h-1zM604 93h1v1h-1zM604 94h1v1h-1zM601 95h1v1h-1zM602 95h1v1h-1zM603 95h1v1h-1zM607 89h1v1h-1zM608 89h1v1h-1zM606 90h1v1h-1zM609 90h1v1h-1zM606 91h1v1h-1zM609 91h1v1h-1zM606 92h1v1h-1zM609 92h1v1h-1zM606 93h1v1h-1zM609 93h1v1h-1zM606 94h1v1h-1zM609 94h1v1h-1zM607 95h1v1h-1zM608 95h1v1h-1zM612 89h1v1h-1zM613 89h1v1h-1zM611 90h1v1h-1zM614 90h1v1h-1zM611 91h1v1h-1zM614 91h1v1h-1zM611 92h1v1h-1zM614 92h1v1h-1zM611 93h1v1h-1zM614 93h1v1h-1zM611 94h1v1h-1zM614 94h1v1h-1zM612 95h1v1h-1zM613 95h1v1h-1zM651 89h1v1h-1zM652 89h1v1h-1zM653 89h1v1h-1zM654 90h1v1h-1zM654 91h1v1h-1zM652 92h1v1h-1zM653 92h1v1h-1zM654 93h1v1h-1zM654 94h1v1h-1zM651 95h1v1h-1zM652 95h1v1h-1zM653 95h1v1h-1zM656 89h1v1h-1zM657 89h1v1h-1zM658 89h1v1h-1zM659 89h1v1h-1zM656 90h1v1h-1zM656 91h1v1h-1zM656 92h1v1h-1zM657 92h1v1h-1zM658 92h1v1h-1zM659 93h1v1h-1zM659 94h1v1h-1zM656 95h1v1h-1zM657 95h1v1h-1zM658 95h1v1h-1zM662 89h1v1h-1zM663 89h1v1h-1zM661 90h1v1h-1zM664 90h1v1h-1zM661 91h1v1h-1zM664 91h1v1h-1zM661 92h1v1h-1zM664 92h1v1h-1zM661 93h1v1h-1zM664 93h1v1h-1zM661 94h1v1h-1zM664 94h1v1h-1zM662 95h1v1h-1zM663 95h1v1h-1zM704 89h1v1h-1zM703 90h1v1h-1zM704 90h1v1h-1zM702 91h1v1h-1zM704 91h1v1h-1zM701 92h1v1h-1zM704 92h1v1h-1zM701 93h1v1h-1zM702 93h1v1h-1zM703 93h1v1h-1zM704 93h1v1h-1zM704 94h1v1h-1zM704 95h1v1h-1zM707 89h1v1h-1zM708 89h1v1h-1zM706 90h1v1h-1zM709 90h1v1h-1zM706 91h1v1h-1zM709 91h1v1h-1zM706 92h1v1h-1zM709 92h1v1h-1zM706 93h1v1h-1zM709 93h1v1h-1zM706 94h1v1h-1zM709 94h1v1h-1zM707 95h1v1h-1zM708 95h1v1h-1zM712 89h1v1h-1zM713 89h1v1h-1zM711 90h1v1h-1zM714 90h1v1h-1zM711 91h1v1h-1zM714 91h1v1h-1zM711 92h1v1h-1zM714 92h1v1h-1zM711 93h1v1h-1zM714 93h1v1h-1zM711 94h1v1h-1zM714 94h1v1h-1zM712 95h1v1h-1zM713 95h1v1h-1zM754 89h1v1h-1zM753 90h1v1h-1zM754 90h1v1h-1zM752 91h1v1h-1zM754 91h1v1h-1zM751 92h1v1h-1zM754 92h1v1h-1zM751 93h1v1h-1zM752 93h1v1h-1zM753 93h1v1h-1zM754 93h1v1h-1zM754 94h1v1h-1zM754 95h1v1h-1zM756 89h1v1h-1zM757 89h1v1h-1zM758 89h1v1h-1zM759 89h1v1h-1zM756 90h1v1h-1zM756 91h1v1h-1zM756 92h1v1h-1zM757 92h1v1h-1zM758 92h1v1h-1zM759 93h1v1h-1zM759 94h1v1h-1zM756 95h1v1h-1zM757 95h1v1h-1zM758 95h1v1h-1zM762 89h1v1h-1zM763 89h1v1h-1zM761 90h1v1h-1zM764 90h1v1h-1zM761 91h1v1h-1zM764 91h1v1h-1zM761 92h1v1h-1zM764 92h1v1h-1zM761 93h1v1h-1zM764 93h1v1h-1zM761 94h1v1h-1zM764 94h1v1h-1zM762 95h1v1h-1zM763 95h1v1h-1zM801 89h1v1h-1zM802 89h1v1h-1zM803 89h1v1h-1zM804 89h1v1h-1zM801 90h1v1h-1zM801 91h1v1h-1zM801 92h1v1h-1zM802 92h1v1h-1zM803 92h1v1h-1zM804 93h1v1h-1zM804 94h1v1h-1zM801 95h1v1h-1zM802 95h1v1h-1zM803 95h1v1h-1zM807 89h1v1h-1zM808 89h1v1h-1zM806 90h1v1h-1zM809 90h1v1h-1zM806 91h1v1h-1zM809 91h1v1h-1zM806 92h1v1h-1zM809 92h1v1h-1zM806 93h1v1h-1zM809 93h1v1h-1zM806 94h1v1h-1zM809 94h1v1h-1zM807 95h1v1h-1zM808 95h1v1h-1zM812 89h1v1h-1zM813 89h1v1h-1zM811 90h1v1h-1zM814 90h1v1h-1zM811 91h1v1h-1zM814 91h1v1h-1zM811 92h1v1h-1zM814 92h1v1h-1zM811 93h1v1h-1zM814 93h1v1h-1zM811 94h1v1h-1zM814 94h1v1h-1zM812 95h1v1h-1zM813 95h1v1h-1zM851 89h1v1h-1zM852 89h1v1h-1zM853 89h1v1h-1zM854 89h1v1h-1zM851 90h1v1h-1zM851 91h1v1h-1zM851 92h1v1h-1zM852 92h1v1h-1zM853 92h1v1h-1zM854 93h1v1h-1zM854 94h1v1h-1zM851 95h1v1h-1zM852 95h1v1h-1zM853 95h1v1h-1zM856 89h1v1h-1zM857 89h1v1h-1zM858 89h1v1h-1zM859 89h1v1h-1zM856 90h1v1h-1zM856 91h1v1h-1zM856 92h1v1h-1zM857 92h1v1h-1zM858 92h1v1h-1zM859 93h1v1h-1zM859 94h1v1h-1zM856 95h1v1h-1zM857 95h1v1h-1zM858 95h1v1h-1zM862 89h1v1h-1zM863 89h1v1h-1zM861 90h1v1h-1zM864 90h1v1h-1zM861 91h1v1h-1zM864 91h1v1h-1zM861 92h1v1h-1zM864 92h1v1h-1zM861 93h1v1h-1zM864 93h1v1h-1zM861 94h1v1h-1zM864 94h1v1h-1zM862 95h1v1h-1zM863 95h1v1h-1zM901 90h1v1h-1zM901 91h1v1h-1zM901 92h1v1h-1zM901 93h1v1h-1zM901 94h1v1h-1zM43 103h1v1h-1zM43 104h1v1h-1zM44 104h1v1h-1zM45 104h1v1h-1zM46 105h1v1h-1zM46 106h1v1h-1zM43 107h1v1h-1zM44 107h1v1h-1zM45 107h1v1h-1zM44 109h1v1h-1zM45 109h1v1h-1zM43 110h1v1h-1zM46 110h1v1h-1zM43 111h1v1h-1zM46 111h1v1h-1zM43 112h1v1h-1zM46 112h1v1h-1zM43 113h1v1h-1zM46 113h1v1h-1zM43 114h1v1h-1zM46 114h1v1h-1zM44 115h1v1h-1zM45 115h1v1h-1zM45 143h1v1h-1zM44 144h1v1h-1zM45 144h1v1h-1zM45 145h1v1h-1zM45 146h1v1h-1zM45 147h1v1h-1zM45 148h1v1h-1zM44 149h1v1h-1zM45 149h1v1h-1zM46 149h1v1h-1zM44 151h1v1h-1zM45 151h1v1h-1zM43 152h1v1h-1zM46 152h1v1h-1zM43 153h1v1h-1zM46 153h1v1h-1zM43 154h1v1h-1zM46 154h1v1h-1zM43 155h1v1h-1zM46 155h1v1h-1zM43 156h1v1h-1zM46 156h1v1h-1zM44 157h1v1h-1zM45 157h1v1h-1zM44 159h1v1h-1zM45 159h1v1h-1zM43 160h1v1h-1zM46 160h1v1h-1zM43 161h1v1h-1zM46 161h1v1h-1zM43 162h1v1h-1zM46 162h1v1h-1zM43 163h1v1h-1zM46 163h1v1h-1zM43 164h1v1h-1zM46 164h1v1h-1zM44 165h1v1h-1zM45 165h1v1h-1zM43 193h1v1h-1zM44 193h1v1h-1zM45 193h1v1h-1zM46 193h1v1h-1zM43 194h1v1h-1zM43 195h1v1h-1zM43 196h1v1h-1zM44 196h1v1h-1zM45 196h1v1h-1zM46 197h1v1h-1zM46 198h1v1h-1zM43 199h1v1h-1zM44 199h1v1h-1zM45 199h1v1h-1zM44 201h1v1h-1zM45 201h1v1h-1zM43 202h1v1h-1zM46 202h1v1h-1zM43 203h1v1h-1zM46 203h1v1h-1zM43 204h1v1h-1zM46 204h1v1h-1zM43 205h1v1h-1zM46 205h1v1h-1zM43 206h1v1h-1zM46 206h1v1h-1zM44 207h1v1h-1zM45 207h1v1h-1zM44 243h1v1h-1zM45 243h1v1h-1zM43 244h1v1h-1zM46 244h1v1h-1zM43 245h1v1h-1zM46 245h1v1h-1zM43 246h1v1h-1zM46 246h1v1h-1zM43 247h1v1h-1zM46 247h1v1h-1zM43 248h1v1h-1zM46 248h1v1h-1zM44 249h1v1h-1zM45 249h1v1h-1zM43 293h1v1h-1zM44 293h1v1h-1zM45 293h1v1h-1zM46 293h1v1h-1zM43 294h1v1h-1zM43 295h1v1h-1zM43 296h1v1h-1zM44 296h1v1h-1zM45 296h1v1h-1zM46 297h1v1h-1zM46 298h1v1h-1zM43 299h1v1h-1zM44 299h1v1h-1zM45 299h1v1h-1zM44 301h1v1h-1zM45 301h1v1h-1zM43 302h1v1h-1zM46 302h1v1h-1zM43 303h1v1h-1zM46 303h1v1h-1zM43 304h1v1h-1zM46 304h1v1h-1zM43 305h1v1h-1zM46 305h1v1h-1zM43 306h1v1h-1zM46 306h1v1h-1zM44 307h1v1h-1zM45 307h1v1h-1zM45 343h1v1h-1zM44 344h1v1h-1zM45 344h1v1h-1zM45 345h1v1h-1zM45 346h1v1h-1zM45 347h1v1h-1zM45 348h1v1h-1zM44 349h1v1h-1zM45 349h1v1h-1zM46 349h1v1h-1zM44 351h1v1h-1zM45 351h1v1h-1zM43 352h1v1h-1zM46 352h1v1h-1zM43 353h1v1h-1zM46 353h1v1h-1zM43 354h1v1h-1zM46 354h1v1h-1zM43 355h1v1h-1zM46 355h1v1h-1zM43 356h1v1h-1zM46 356h1v1h-1zM44 357h1v1h-1zM45 357h1v1h-1zM44 359h1v1h-1zM45 359h1v1h-1zM43 360h1v1h-1zM46 360h1v1h-1zM43 361h1v1h-1zM46 361h1v1h-1zM43 362h1v1h-1zM46 362h1v1h-1zM43 363h1v1h-1zM46 363h1v1h-1zM43 364h1v1h-1zM46 364h1v1h-1zM44 365h1v1h-1zM45 365h1v1h-1zM45 393h1v1h-1zM44 394h1v1h-1zM45 394h1v1h-1zM45 395h1v1h-1zM45 396h1v1h-1zM45 397h1v1h-1zM45 398h1v1h-1zM44 399h1v1h-1zM45 399h1v1h-1zM46 399h1v1h-1zM43 401h1v1h-1zM44 401h1v1h-1zM45 401h1v1h-1zM46 401h1v1h-1zM43 402h1v1h-1zM43 403h1v1h-1zM43 404h1v1h-1zM44 404h1v1h-1zM45 404h1v1h-1zM46 405h1v1h-1zM46 406h1v1h-1zM43 407h1v1h-1zM44 407h1v1h-1zM45 407h1v1h-1zM44 409h1v1h-1zM45 409h1v1h-1zM43 410h1v1h-1zM46 410h1v1h-1zM43 411h1v1h-1zM46 411h1v1h-1zM43 412h1v1h-1zM46 412h1v1h-1zM43 413h1v1h-1zM46 413h1v1h-1zM43 414h1v1h-1zM46 414h1v1h-1zM44 415h1v1h-1zM45 415h1v1h-1zM43 443h1v1h-1zM44 443h1v1h-1zM45 443h1v1h-1zM46 444h1v1h-1zM46 445h1v1h-1zM45 446h1v1h-1zM44 447h1v1h-1zM43 448h1v1h-1zM43 449h1v1h-1zM44 449h1v1h-1zM45 449h1v1h-1zM46 449h1v1h-1zM44 451h1v1h-1zM45 451h1v1h-1zM43 452h1v1h-1zM46 452h1v1h-1zM43 453h1v1h-1zM46 453h1v1h-1zM43 454h1v1h-1zM46 454h1v1h-1zM43 455h1v1h-1zM46 455h1v1h-1zM43 456h1v1h-1zM46 456h1v1h-1zM44 457h1v1h-1zM45 457h1v1h-1zM44 459h1v1h-1zM45 459h1v1h-1zM43 460h1v1h-1zM46 460h1v1h-1zM43 461h1v1h-1zM46 461h1v1h-1zM43 462h1v1h-1zM46 462h1v1h-1zM43 463h1v1h-1zM46 463h1v1h-1zM43 464h1v1h-1zM46 464h1v1h-1zM44 465h1v1h-1zM45 465h1v1h-1zM43 493h1v1h-1zM44 493h1v1h-1zM45 493h1v1h-1zM46 494h1v1h-1zM46 495h1v1h-1zM45 496h1v1h-1zM44 497h1v1h-1zM43 498h1v1h-1zM43 499h1v1h-1zM44 499h1v1h-1zM45 499h1v1h-1zM46 499h1v1h-1zM43 501h1v1h-1zM44 501h1v1h-1zM45 501h1v1h-1zM46 501h1v1h-1zM43 502h1v1h-1zM43 503h1v1h-1zM43 504h1v1h-1zM44 504h1v1h-1zM45 504h1v1h-1zM46 505h1v1h-1zM46 506h1v1h-1zM43 507h1v1h-1zM44 507h1v1h-1zM45 507h1v1h-1zM44 509h1v1h-1zM45 509h1v1h-1zM43 510h1v1h-1zM46 510h1v1h-1zM43 511h1v1h-1zM46 511h1v1h-1zM43 512h1v1h-1zM46 512h1v1h-1zM43 513h1v1h-1zM46 513h1v1h-1zM43 514h1v1h-1zM46 514h1v1h-1zM44 515h1v1h-1zM45 515h1v1h-1zM43 543h1v1h-1zM44 543h1v1h-1zM45 543h1v1h-1zM46 544h1v1h-1zM46 545h1v1h-1zM44 546h1v1h-1zM45 546h1v1h-1zM46 547h1v1h-1zM46 548h1v1h-1zM43 549h1v1h-1zM44 549h1v1h-1zM45 549h1v1h-1zM44 551h1v1h-1zM45 551h1v1h-1zM43 552h1v1h-1zM46 552h1v1h-1zM43 553h1v1h-1zM46 553h1v1h-1zM43 554h1v1h-1zM46 554h1v1h-1zM43 555h1v1h-1zM46 555h1v1h-1zM43 556h1v1h-1zM46 556h1v1h-1zM44 557h1v1h-1zM45 557h1v1h-1zM44 559h1v1h-1zM45 559h1v1h-1zM43 560h1v1h-1zM46 560h1v1h-1zM43 561h1v1h-1zM46 561h1v1h-1zM43 562h1v1h-1zM46 562h1v1h-1zM43 563h1v1h-1zM46 563h1v1h-1zM43 564h1v1h-1zM46 564h1v1h-1zM44 565h1v1h-1zM45 565h1v1h-1zM43 593h1v1h-1zM44 593h1v1h-1zM45 593h1v1h-1zM46 594h1v1h-1zM46 595h1v1h-1zM44 596h1v1h-1zM45 596h1v1h-1zM46 597h1v1h-1zM46 598h1v1h-1zM43 599h1v1h-1zM44 599h1v1h-1zM45 599h1v1h-1zM43 601h1v1h-1zM44 601h1v1h-1zM45 601h1v1h-1zM46 601h1v1h-1zM43 602h1v1h-1zM43 603h1v1h-1zM43 604h1v1h-1zM44 604h1v1h-1zM45 604h1v1h-1zM46 605h1v1h-1zM46 606h1v1h-1zM43 607h1v1h-1zM44 607h1v1h-1zM45 607h1v1h-1zM44 609h1v1h-1zM45 609h1v1h-1zM43 610h1v1h-1zM46 610h1v1h-1zM43 611h1v1h-1zM46 611h1v1h-1zM43 612h1v1h-1zM46 612h1v1h-1zM43 613h1v1h-1zM46 613h1v1h-1zM43 614h1v1h-1zM46 614h1v1h-1zM44 615h1v1h-1zM45 615h1v1h-1zM46 643h1v1h-1zM45 644h1v1h-1zM46 644h1v1h-1zM44 645h1v1h-1zM46 645h1v1h-1zM43 646h1v1h-1zM46 646h1v1h-1zM43 647h1v1h-1zM44 647h1v1h-1zM45 647h1v1h-1zM46 647h1v1h-1zM46 648h1v1h-1zM46 649h1v1h-1zM44 651h1v1h-1zM45 651h1v1h-1zM43 652h1v1h-1zM46 652h1v1h-1zM43 653h1v1h-1zM46 653h1v1h-1zM43 654h1v1h-1zM46 654h1v1h-1zM43 655h1v1h-1zM46 655h1v1h-1zM43 656h1v1h-1zM46 656h1v1h-1zM44 657h1v1h-1zM45 657h1v1h-1zM44 659h1v1h-1zM45 659h1v1h-1zM43 660h1v1h-1zM46 660h1v1h-1zM43 661h1v1h-1zM46 661h1v1h-1zM43 662h1v1h-1zM46 662h1v1h-1zM43 663h1v1h-1zM46 663h1v1h-1zM43 664h1v1h-1zM46 664h1v1h-1zM44 665h1v1h-1zM45 665h1v1h-1z" fill="#000" shape-rendering="crispEdges"/></svg><div class="a" style="left:56px;top:88px;width:1px;height:14px;background:#9a9a9a"></div><div class="a" style="left:42px;top:102px;width:15px;height:1px;background:#8a8a8a"></div><svg style="left:0px;top:0px" width="902" height="677" viewBox="0 0 902 677" ><path d="M52 89h1v1h-1zM52 91h1v1h-1zM52 93h1v1h-1zM52 95h1v1h-1zM52 101h1v1h-1zM43 98h1v1h-1zM45 98h1v1h-1zM47 98h1v1h-1zM49 98h1v1h-1zM55 98h1v1h-1zM52 97h1v1h-1zM51 98h1v1h-1zM53 98h1v1h-1zM52 99h1v1h-1z" fill="#000" shape-rendering="crispEdges"/></svg><div class="a" style="left:57px;top:103px;width:845px;height:574px;background:#c0c0c0"></div><div class="a" style="left:299px;top:241px;width:590px;height:431px;background:#fff"></div><div class="a" style="left:381px;top:315px;width:401px;height:301px;background:#e31b3a;border:1px solid #62a8cc;border-right-color:#506868;border-bottom-color:#506868"></div><div class="a" style="left:667px;top:131px;width:129px;height:117px;background:#d8d8d8;border:1px solid #333;border-radius:4px 4px 0 0;overflow:hidden"><div class="a" style="left:0;top:0;width:127px;height:11px;background:linear-gradient(#4c4c4c,#363636)"></div><div class="a" style="left:0;top:11px;width:127px;height:1px;background:#0a0a0a"></div><div class="a" style="left:0;top:12px;width:127px;height:1px;background:#f6f6f6"></div><div class="a" style="left:0;top:12px;width:1px;height:105px;background:#f6f6f6"></div></div><svg style="left:0px;top:0px" width="902" height="677" viewBox="0 0 902 677" ><defs><radialGradient id="ib" cx="0.4" cy="0.25" r="0.8"><stop offset="0" stop-color="#9a9a9a"/><stop offset="0.6" stop-color="#4a4a4a"/><stop offset="1" stop-color="#1a1a1a"/></radialGradient><filter id="psh" x="-30%" y="-30%" width="160%" height="160%"><feDropShadow dx="0.8" dy="1" stdDeviation="0.7" flood-opacity="0.35"/></filter></defs><rect x="672" y="148" width="1" height="1" fill="#9c9c9c"/><rect x="672" y="150" width="1" height="1" fill="#9c9c9c"/><rect x="674" y="148" width="1" height="1" fill="#9c9c9c"/><rect x="674" y="150" width="1" height="1" fill="#9c9c9c"/><rect x="676" y="148" width="1" height="1" fill="#9c9c9c"/><rect x="676" y="150" width="1" height="1" fill="#9c9c9c"/><rect x="678" y="148" width="1" height="1" fill="#9c9c9c"/><rect x="678" y="150" width="1" height="1" fill="#9c9c9c"/><rect x="680" y="148" width="1" height="1" fill="#9c9c9c"/><rect x="680" y="150" width="1" height="1" fill="#9c9c9c"/><rect x="682" y="148" width="1" height="1" fill="#9c9c9c"/><rect x="682" y="150" width="1" height="1" fill="#9c9c9c"/><rect x="684" y="148" width="1" height="1" fill="#9c9c9c"/><rect x="684" y="150" width="1" height="1" fill="#9c9c9c"/><rect x="686" y="148" width="1" height="1" fill="#9c9c9c"/><rect x="686" y="150" width="1" height="1" fill="#9c9c9c"/><rect x="688" y="148" width="1" height="1" fill="#9c9c9c"/><rect x="688" y="150" width="1" height="1" fill="#9c9c9c"/><rect x="690" y="148" width="1" height="1" fill="#9c9c9c"/><rect x="690" y="150" width="1" height="1" fill="#9c9c9c"/><rect x="692" y="148" width="1" height="1" fill="#9c9c9c"/><rect x="692" y="150" width="1" height="1" fill="#9c9c9c"/><rect x="694" y="148" width="1" height="1" fill="#9c9c9c"/><rect x="694" y="150" width="1" height="1" fill="#9c9c9c"/><rect x="696" y="148" width="1" height="1" fill="#9c9c9c"/><rect x="696" y="150" width="1" height="1" fill="#9c9c9c"/><rect x="698" y="148" width="1" height="1" fill="#9c9c9c"/><rect x="698" y="150" width="1" height="1" fill="#9c9c9c"/><rect x="700" y="148" width="1" height="1" fill="#9c9c9c"/><rect x="700" y="150" width="1" height="1" fill="#9c9c9c"/><rect x="702" y="148" width="1" height="1" fill="#9c9c9c"/><rect x="702" y="150" width="1" height="1" fill="#9c9c9c"/><rect x="704" y="148" width="1" height="1" fill="#9c9c9c"/><rect x="704" y="150" width="1" height="1" fill="#9c9c9c"/><rect x="706" y="148" width="1" height="1" fill="#9c9c9c"/><rect x="706" y="150" width="1" height="1" fill="#9c9c9c"/><rect x="708" y="148" width="1" height="1" fill="#9c9c9c"/><rect x="708" y="150" width="1" height="1" fill="#9c9c9c"/><rect x="710" y="148" width="1" height="1" fill="#9c9c9c"/><rect x="710" y="150" width="1" height="1" fill="#9c9c9c"/><rect x="712" y="148" width="1" height="1" fill="#9c9c9c"/><rect x="712" y="150" width="1" height="1" fill="#9c9c9c"/><rect x="714" y="148" width="1" height="1" fill="#9c9c9c"/><rect x="714" y="150" width="1" height="1" fill="#9c9c9c"/><rect x="716" y="148" width="1" height="1" fill="#9c9c9c"/><rect x="716" y="150" width="1" height="1" fill="#9c9c9c"/><rect x="718" y="148" width="1" height="1" fill="#9c9c9c"/><rect x="718" y="150" width="1" height="1" fill="#9c9c9c"/><rect x="720" y="148" width="1" height="1" fill="#9c9c9c"/><rect x="720" y="150" width="1" height="1" fill="#9c9c9c"/><rect x="722" y="148" width="1" height="1" fill="#9c9c9c"/><rect x="722" y="150" width="1" height="1" fill="#9c9c9c"/><rect x="724" y="148" width="1" height="1" fill="#9c9c9c"/><rect x="724" y="150" width="1" height="1" fill="#9c9c9c"/><rect x="726" y="148" width="1" height="1" fill="#9c9c9c"/><rect x="726" y="150" width="1" height="1" fill="#9c9c9c"/><rect x="728" y="148" width="1" height="1" fill="#9c9c9c"/><rect x="728" y="150" width="1" height="1" fill="#9c9c9c"/><rect x="730" y="148" width="1" height="1" fill="#9c9c9c"/><rect x="730" y="150" width="1" height="1" fill="#9c9c9c"/><rect x="732" y="148" width="1" height="1" fill="#9c9c9c"/><rect x="732" y="150" width="1" height="1" fill="#9c9c9c"/><rect x="734" y="148" width="1" height="1" fill="#9c9c9c"/><rect x="734" y="150" width="1" height="1" fill="#9c9c9c"/><rect x="736" y="148" width="1" height="1" fill="#9c9c9c"/><rect x="736" y="150" width="1" height="1" fill="#9c9c9c"/><rect x="738" y="148" width="1" height="1" fill="#9c9c9c"/><rect x="738" y="150" width="1" height="1" fill="#9c9c9c"/><rect x="740" y="148" width="1" height="1" fill="#9c9c9c"/><rect x="740" y="150" width="1" height="1" fill="#9c9c9c"/><rect x="742" y="148" width="1" height="1" fill="#9c9c9c"/><rect x="742" y="150" width="1" height="1" fill="#9c9c9c"/><rect x="744" y="148" width="1" height="1" fill="#9c9c9c"/><rect x="744" y="150" width="1" height="1" fill="#9c9c9c"/><rect x="746" y="148" width="1" height="1" fill="#9c9c9c"/><rect x="746" y="150" width="1" height="1" fill="#9c9c9c"/><rect x="748" y="148" width="1" height="1" fill="#9c9c9c"/><rect x="748" y="150" width="1" height="1" fill="#9c9c9c"/><rect x="750" y="148" width="1" height="1" fill="#9c9c9c"/><rect x="750" y="150" width="1" height="1" fill="#9c9c9c"/><rect x="752" y="148" width="1" height="1" fill="#9c9c9c"/><rect x="752" y="150" width="1" height="1" fill="#9c9c9c"/><rect x="754" y="148" width="1" height="1" fill="#9c9c9c"/><rect x="754" y="150" width="1" height="1" fill="#9c9c9c"/><rect x="756" y="148" width="1" height="1" fill="#9c9c9c"/><rect x="756" y="150" width="1" height="1" fill="#9c9c9c"/><rect x="758" y="148" width="1" height="1" fill="#9c9c9c"/><rect x="758" y="150" width="1" height="1" fill="#9c9c9c"/><rect x="760" y="148" width="1" height="1" fill="#9c9c9c"/><rect x="760" y="150" width="1" height="1" fill="#9c9c9c"/><rect x="762" y="148" width="1" height="1" fill="#9c9c9c"/><rect x="762" y="150" width="1" height="1" fill="#9c9c9c"/><rect x="764" y="148" width="1" height="1" fill="#9c9c9c"/><rect x="764" y="150" width="1" height="1" fill="#9c9c9c"/><rect x="766" y="148" width="1" height="1" fill="#9c9c9c"/><rect x="766" y="150" width="1" height="1" fill="#9c9c9c"/><rect x="768" y="148" width="1" height="1" fill="#9c9c9c"/><rect x="768" y="150" width="1" height="1" fill="#9c9c9c"/><rect x="770" y="148" width="1" height="1" fill="#9c9c9c"/><rect x="770" y="150" width="1" height="1" fill="#9c9c9c"/><rect x="772" y="148" width="1" height="1" fill="#9c9c9c"/><rect x="772" y="150" width="1" height="1" fill="#9c9c9c"/><rect x="774" y="148" width="1" height="1" fill="#9c9c9c"/><rect x="774" y="150" width="1" height="1" fill="#9c9c9c"/><rect x="776" y="148" width="1" height="1" fill="#9c9c9c"/><rect x="776" y="150" width="1" height="1" fill="#9c9c9c"/><rect x="778" y="148" width="1" height="1" fill="#9c9c9c"/><rect x="778" y="150" width="1" height="1" fill="#9c9c9c"/><rect x="780" y="148" width="1" height="1" fill="#9c9c9c"/><rect x="780" y="150" width="1" height="1" fill="#9c9c9c"/><rect x="782" y="148" width="1" height="1" fill="#9c9c9c"/><rect x="782" y="150" width="1" height="1" fill="#9c9c9c"/><rect x="784" y="148" width="1" height="1" fill="#9c9c9c"/><rect x="784" y="150" width="1" height="1" fill="#9c9c9c"/><rect x="786" y="148" width="1" height="1" fill="#9c9c9c"/><rect x="786" y="150" width="1" height="1" fill="#9c9c9c"/><rect x="788" y="148" width="1" height="1" fill="#9c9c9c"/><rect x="788" y="150" width="1" height="1" fill="#9c9c9c"/><rect x="790" y="148" width="1" height="1" fill="#9c9c9c"/><rect x="790" y="150" width="1" height="1" fill="#9c9c9c"/><path d="M770 135 L773.5 137.5 L770 140Z M774 135 L777.5 137.5 L774 140Z" fill="#cfcfcf"/><rect x="781" y="134" width="1" height="7" fill="#7a7a7a"/><path d="M786.5 135.5 L791.5 140 M791.5 135.5 L786.5 140" stroke="#e8e8e8" stroke-width="1.6"/><circle cx="685.3" cy="169.3" r="8.2" fill="url(#ib)" stroke="#2a2a2a" stroke-width="0.6" filter="url(#psh)"/><circle cx="685.5" cy="164.7" r="1.4" fill="#f4f4f4"/><path d="M683.2 167 H686.7 V173.5 H688 V175 H683 V173.5 H684.3 V168.5 H683.2Z" fill="#f4f4f4"/><rect x="691" y="191" width="1" height="17" fill="#222"/><path d="M686 229 L695 233.5 L686 238 L677 233.5Z" fill="#3c3c3c" filter="url(#psh)"/><path d="M686 225 L695 229.5 L686 234 L677 229.5Z" fill="#9a9a9a"/><path d="M686 221 L695 225.5 L686 230 L677 225.5Z" fill="#f4f4f4" stroke="#8a8a8a" stroke-width="0.6"/></svg><div class="t" style="left:678px;top:191px;font-size:17px;color:#333;line-height:17px;-webkit-text-stroke:0.45px #333">A</div><div class="t" style="left:704px;top:165px;font-size:10px;font-weight:bold;color:#4e4e4e;line-height:10px;letter-spacing:0.7px;font-size:9.5px;-webkit-text-stroke:0.3px #4e4e4e">INFO</div><div class="t" style="left:704px;top:195px;font-size:10px;font-weight:bold;color:#4e4e4e;line-height:10px;letter-spacing:0.7px;font-size:9.5px;-webkit-text-stroke:0.3px #4e4e4e">CHARACTER</div><div class="t" style="left:704px;top:225px;font-size:10px;font-weight:bold;color:#4e4e4e;line-height:10px;letter-spacing:0.7px;font-size:9.5px;-webkit-text-stroke:0.3px #4e4e4e">LAYERS</div><div class="a" style="left:208px;top:59px;width:262px;height:136px;background:#d8d8d8;border-top:1px solid #fcfcfc;border-left:1px solid #fcfcfc;border-right:1px solid #6e6e64;border-bottom:1px solid #6e6e64"></div><div class="a" style="left:468px;top:60px;width:1px;height:134px;background:#a8a89a"></div><div class="a" style="left:209px;top:193px;width:259px;height:1px;background:#a8a89a"></div><div class="a" style="left:216px;top:74px;width:244px;height:111px;border:1px solid #a09c8c"></div><div class="a" style="left:217px;top:75px;width:244px;height:111px;border:1px solid #fff"></div><div class="a" style="left:227px;top:68px;width:101px;height:12px;background:#d8d8d8"></div><div class="t" style="left:232px;top:70px;font-size:11px;font-weight:bold;color:#0842d4;line-height:11px;letter-spacing:-0.28px">Rectangle Options</div><div class="a" style="left:225px;top:87px;width:13px;height:13px;border-radius:50%;border:1px solid #2b5b8a;background:radial-gradient(circle at 35% 35%,#fff,#dcdcd6)"></div><div class="t" style="left:239px;top:88px;font-size:9.6px;color:#000;line-height:11px;letter-spacing:0.3px">Unconstrained</div><div class="a" style="left:225px;top:107px;width:13px;height:13px;border-radius:50%;border:1px solid #2b5b8a;background:radial-gradient(circle at 35% 35%,#fff,#dcdcd6)"></div><div class="a" style="left:226px;top:108px;width:11px;height:11px;border-radius:50%;border:2px solid #f8b84a;background:#f0efe6"></div><div class="t" style="left:239px;top:108px;font-size:9.6px;color:#000;line-height:11px;letter-spacing:0.3px">Square</div><div class="a" style="left:225px;top:127px;width:13px;height:13px;border-radius:50%;border:1px solid #2b5b8a;background:radial-gradient(circle at 35% 35%,#fff,#dcdcd6)"></div><div class="a" style="left:229px;top:131px;width:5px;height:5px;border-radius:50%;background:#21a121"></div><div class="t" style="left:239px;top:128px;font-size:9.6px;color:#000;line-height:11px;letter-spacing:0.3px">Fixed Size</div><div class="a" style="left:225px;top:147px;width:13px;height:13px;border-radius:50%;border:1px solid #2b5b8a;background:radial-gradient(circle at 35% 35%,#fff,#dcdcd6)"></div><div class="t" style="left:239px;top:148px;font-size:9.6px;color:#000;line-height:11px;letter-spacing:0.3px">Proportional</div><div class="t" style="left:304px;top:129px;font-size:10px;color:#000;line-height:11px">W:</div><div class="a" style="left:322px;top:126px;width:56px;height:16px;background:#fff;border:1px solid #7f9db9"></div><div class="t" style="left:328px;top:129px;font-size:10px;color:#000;line-height:11px;letter-spacing:0.1px">400 px</div><div class="a" style="left:397px;top:126px;width:56px;height:16px;background:#fff;border:1px solid #7f9db9"></div><div class="t" style="left:304px;top:149px;font-size:10px;color:#b8b4a4;line-height:11px">W:</div><div class="a" style="left:322px;top:146px;width:56px;height:16px;background:#d6d6d6;border:1px solid #a3b7cc"></div><div class="t" style="left:382px;top:149px;font-size:10px;color:#b8b4a4;line-height:11px">H:</div><div class="a" style="left:397px;top:146px;width:56px;height:16px;background:#d6d6d6;border:1px solid #a3b7cc"></div><div class="a" style="left:225px;top:165px;width:13px;height:13px;border:1px solid #1c5180;background:linear-gradient(135deg,#dcdcd6,#fff)"></div><div class="t" style="left:239px;top:166px;font-size:9.6px;color:#000;line-height:11px;letter-spacing:0.3px">From Center</div><div class="a" style="left:372px;top:165px;width:13px;height:13px;border:1px solid #1c5180;background:linear-gradient(135deg,#dcdcd6,#fff)"></div><div class="t" style="left:386px;top:166px;font-size:9.6px;color:#000;line-height:11px;letter-spacing:0.3px">Snap to Pixels</div><div class="a" style="left:372px;top:130px;width:151px;height:17px;background:#ffffe1;border:1px solid #000"></div><div class="t" style="left:375px;top:133px;font-size:11px;color:#000;line-height:11px;letter-spacing:0px">Constrain to drawing squares</div><svg style="left:0px;top:0px" width="902" height="677" viewBox="0 0 902 677" ><g stroke="#e3173c" fill="none" stroke-linecap="round" stroke-linejoin="round"><path d="M96.8 498 C99 497 101 495 102.3 494 C102.5 500 102.8 507 103.2 513.5 M97.2 514.2 C101 514 105 514 108.8 514" stroke-width="4.4"/><path d="M356.3 59 C355.5 55.5 358.5 53 362.5 53.3 C367 53.6 369 57 367 60.5 C364 65 358 70 353.8 74.6 C359 73.5 365 72.5 370.4 71.8" stroke-width="4"/><path d="M377.8 107.2 C377 104 381 103.5 385 104 C389 104.7 390 108 387.5 110.5 C385 112.5 381.5 113 379.5 113.3 C385 113 390 114.5 390.3 118.5 C390.5 122.5 386 124.3 382 124 C379.5 123.8 377.5 121.5 377.2 119.2" stroke-width="4.2"/><path d="M339.7 304.7 C338.5 308 336.5 312 336.8 315.8 C340 317.5 345 317.6 350.5 317.2" stroke-width="3.9"/><path d="M347.3 326.5 C346.8 320 345.8 312 345.9 307.5 C346 303.5 350.8 303 351 307.5 C351.2 311 350.6 315 348.2 318" stroke-width="3.3"/></g></svg></body></html>
